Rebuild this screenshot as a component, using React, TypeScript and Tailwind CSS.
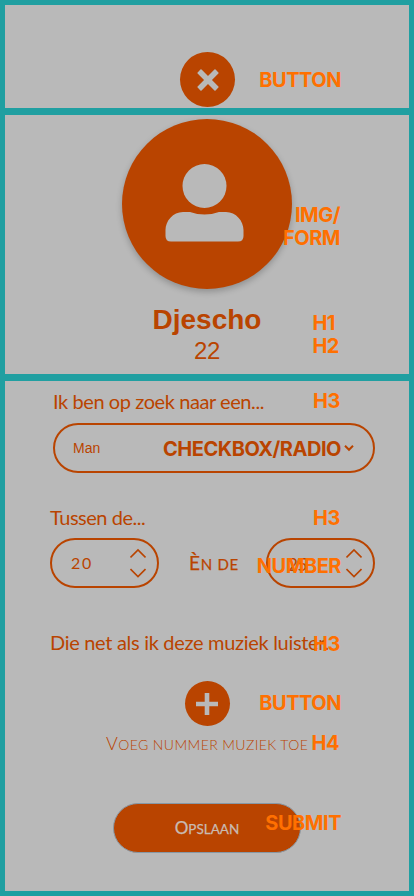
import React from 'react';

const inter = 'font-["Inter",sans-serif]';
const lato = 'font-["Lato",sans-serif]';
const arial = 'font-["Liberation_Sans",Arial,sans-serif]';

function Tag({ className, children }: { className: string; children: React.ReactNode }) {
  return (
    <span
      className={`pointer-events-none absolute z-10 whitespace-pre text-right text-[20px] leading-[23px] font-bold tracking-[-0.48px] ${inter} ${className}`}
    >
      {children}
    </span>
  );
}

function NumberField({ value, valueClass }: { value: string; valueClass: string }) {
  return (
    <div className="flex h-[50px] w-[109px] items-center justify-between rounded-full border-2 border-[#b94400] pr-[11px] pl-[19px]">
      <span className={valueClass}>{value}</span>
      <svg width="16" height="30" viewBox="0 0 16 30" fill="none" stroke="#b94400" strokeWidth="1.6">
        <path d="M0.5 9.5 L8 2 L15.5 9.5" />
        <path d="M0.5 21 L8 28.5 L15.5 21" />
      </svg>
    </div>
  );
}

export default function App() {
  return (
    <div className="flex h-[896px] w-[414px] flex-col gap-[7px] overflow-hidden bg-[#209fa1] p-[5px] text-[#b94400]">
      <header className="relative h-[103px] shrink-0 bg-[#b9b9b9] pt-[47px] pl-[175px]">
        <button className="flex size-[55px] items-center justify-center rounded-full bg-[#b94400]">
          <svg width="22" height="22" viewBox="0 0 22 22" fill="#b9b9b9">
            <g transform="rotate(45 11 11)">
              <rect x="-1.7" y="8.200" width="25.400" height="5.600" rx="0.8" />
              <rect x="8.200" y="-1.7" width="5.600" height="25.400" rx="0.8" />
            </g>
          </svg>
        </button>
        <Tag className="right-[68px] top-[64px] text-[#ff7000]">BUTTON</Tag>
      </header>

      <section className="relative flex h-[259px] shrink-0 flex-col items-center bg-[#b9b9b9] pt-1">
        <div className="size-[170px] rounded-full bg-[#b94400] shadow-[0_3px_6px_rgba(0,0,0,0.22)]">
          <svg width="170" height="170" viewBox="0 0 170 170" fill="#b9b9b9">
            <circle cx="82.5" cy="67" r="22" />
            <path d="M61 93 H68 Q82.5 98 97 93 H104 C114 93 121.5 102 121.5 111 V117 Q121.5 122.500 116 122.500 H49 Q43.500 122.500 43.500 117 V111 C43.500 102 51 93 61 93 Z" />
          </svg>
        </div>
        <h1 className={`mt-[15px] text-[28px] leading-[32px] font-bold ${arial}`}>Djescho</h1>
        <h2 className={`text-[24px] leading-[30px] tracking-[-0.3px] ${arial}`}>22</h2>
        <Tag className="right-[69px] top-[89px] text-[#ff7000]">{'IMG/\nFORM'}</Tag>
        <Tag className="right-[70px] top-[197px] !text-left text-[#ff7000]">{'H1\nH2'}</Tag>
      </section>

      <section className="relative flex h-[510px] shrink-0 flex-col bg-[#b9b9b9]">
        <h3 className={`mt-[7px] ml-[48px] h-[35px] text-[20px] leading-[26px] tracking-[-0.42px] ${lato}`}>Ik ben op zoek naar een...</h3>
        <div className={`ml-[48px] flex h-[50px] w-[322px] items-center justify-between rounded-full border-2 border-[#b94400] pr-[19px] pl-[18px] ${arial}`}>
          <span className="text-[14px]">Man</span>
          <svg width="10" height="8" viewBox="0 0 10 8" fill="none" stroke="#b94400" strokeWidth="2">
            <path d="M1 1.800 L5 5.800 L9 1.800" />
          </svg>
        </div>

        <h3 className={`mt-[31px] ml-[45px] h-[34px] text-[20px] leading-[26px] tracking-[-0.48px] ${lato}`}>Tussen de...</h3>
        <div className="ml-[45px] flex w-[325px] items-center justify-between">
          <NumberField value="20" valueClass={`text-[16px] tracking-[1.6px] ${lato}`} />
          <span className={`ml-[3px] block text-[15px] leading-[22px] tracking-[0.7px] uppercase [-webkit-text-stroke:0.25px_#b94400] first-letter:text-[19px] ${lato}`}>Èn de</span>
          <NumberField value="25" valueClass={`mt-[3px] ml-[1px] text-[17px] tracking-[-0.4px] ${lato}`} />
        </div>

        <h3 className={`mt-[41px] ml-[45px] text-[20px] leading-[26px] tracking-[-0.31px] whitespace-nowrap ${lato}`}>Die net als ik deze muziek luister.</h3>
        <button className="mt-[26px] ml-[179.5px] flex size-[45px] items-center justify-center rounded-full bg-[#b94400]">
          <svg width="22" height="22" viewBox="0 0 22 22" stroke="#b9b9b9" strokeWidth="4.6">
            <path d="M0 11 H22 M11 0 V22" />
          </svg>
        </button>
        <h4 className={`mt-[4px] ml-[101px] h-[26px] text-[14px] leading-[26px] font-light tracking-[0.4px] whitespace-nowrap uppercase first-letter:text-[18px] ${lato}`}>Voeg nummer muziek toe</h4>
        <button className="mt-[47px] ml-[108px] flex h-[50px] w-[188px] items-center justify-center rounded-full border border-[#8798a5] bg-[#b94400]">
          <span className={`block text-[13.5px] leading-[22px] text-[#c9bbb2] uppercase [-webkit-text-stroke:0.25px_#c9bbb2] first-letter:text-[17px] ${lato}`}>Opslaan</span>
        </button>

        <Tag className="right-[69px] top-[9px] text-[#ff7000]">H3</Tag>
        <Tag className="right-[68px] top-[57px] text-[#b94400]">CHECKBOX/RADIO</Tag>
        <Tag className="right-[69px] top-[126px] text-[#ff7000]">H3</Tag>
        <Tag className="right-[68px] top-[174px] text-[#ff7000]">NUMBER</Tag>
        <Tag className="right-[69px] top-[252px] text-[#ff7000]">H3</Tag>
        <Tag className="right-[68px] top-[311px] text-[#ff7000]">BUTTON</Tag>
        <Tag className="right-[70px] top-[351px] text-[#ff7000]">H4</Tag>
        <Tag className="right-[68px] top-[431px] text-[#ff7000]">SUBMIT</Tag>
      </section>
    </div>
  );
}
